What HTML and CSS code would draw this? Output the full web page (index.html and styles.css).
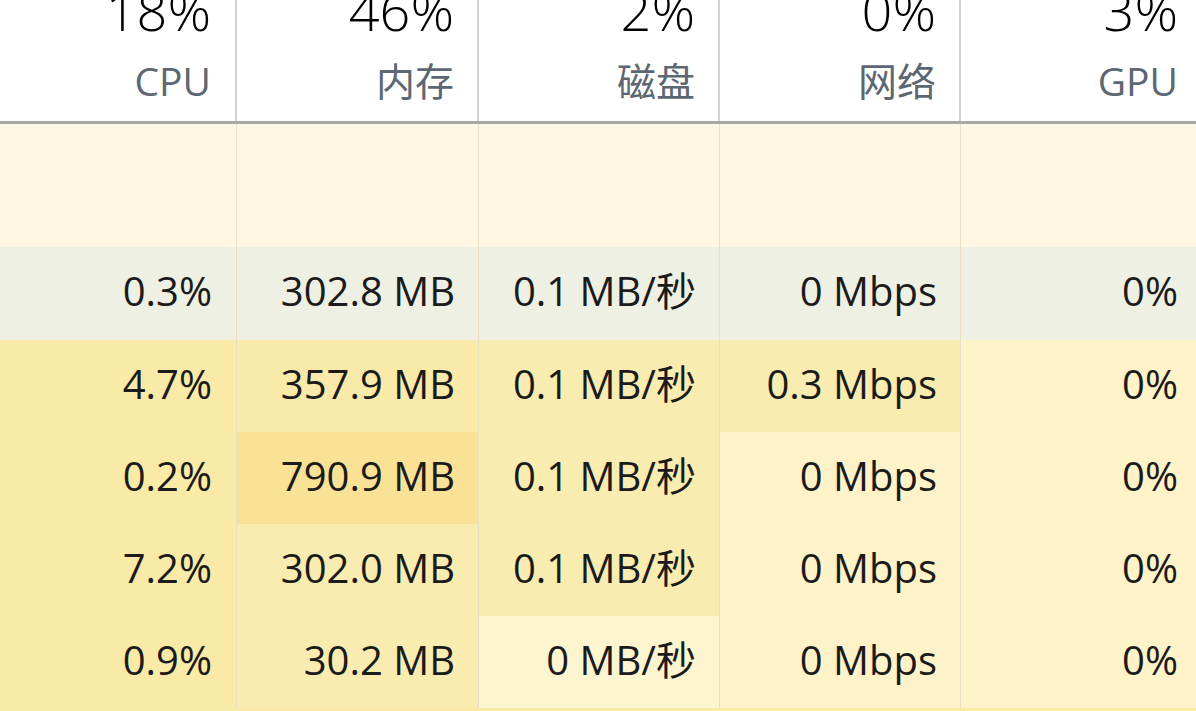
FILE: index.html
```html
<!DOCTYPE html>
<html lang="zh-CN">
<head>
<meta charset="utf-8">
<title>任务管理器</title>
<link rel="stylesheet" href="styles.css">
</head>
<body>
<div class="table">
  <div class="row head">
    <div class="cell"><span class="big">18%</span><span class="label">CPU</span></div>
    <div class="cell"><span class="big">46%</span><span class="label">内存</span></div>
    <div class="cell"><span class="big">2%</span><span class="label">磁盘</span></div>
    <div class="cell"><span class="big">0%</span><span class="label">网络</span></div>
    <div class="cell"><span class="big">3%</span><span class="label">GPU</span></div>
  </div>
  <div class="row group">
    <div class="cell"></div><div class="cell"></div><div class="cell"></div><div class="cell"></div><div class="cell"></div>
  </div>
  <div class="row data hover">
    <div class="cell">0.3%</div>
    <div class="cell">302.8 MB</div>
    <div class="cell">0.1 MB/秒</div>
    <div class="cell">0 Mbps</div>
    <div class="cell">0%</div>
  </div>
  <div class="row data">
    <div class="cell h-cpu">4.7%</div>
    <div class="cell h-2">357.9 MB</div>
    <div class="cell h-3">0.1 MB/秒</div>
    <div class="cell h-3">0.3 Mbps</div>
    <div class="cell h-0">0%</div>
  </div>
  <div class="row data">
    <div class="cell h-cpu">0.2%</div>
    <div class="cell h-1">790.9 MB</div>
    <div class="cell h-3">0.1 MB/秒</div>
    <div class="cell h-0">0 Mbps</div>
    <div class="cell h-0">0%</div>
  </div>
  <div class="row data">
    <div class="cell h-cpu">7.2%</div>
    <div class="cell h-2b">302.0 MB</div>
    <div class="cell h-3">0.1 MB/秒</div>
    <div class="cell h-0">0 Mbps</div>
    <div class="cell h-0">0%</div>
  </div>
  <div class="row data">
    <div class="cell h-cpu">0.9%</div>
    <div class="cell h-3">30.2 MB</div>
    <div class="cell h-low">0 MB/秒</div>
    <div class="cell h-0">0 Mbps</div>
    <div class="cell h-0">0%</div>
  </div>
</div>
</body>
</html>
```

FILE: styles.css
```css
html, body {
  margin: 0;
  padding: 0;
  height: 100%;
  overflow: hidden;
}

body {
  font-family: "Open Sans", "Noto Sans CJK SC", sans-serif;
  color: #1b1b1b;
  background: #f9eaa8;
}

.table {
  display: flex;
  flex-direction: column;
}

.row {
  display: grid;
  grid-template-columns: 237px 242px 241px 241px 1fr;
}

.cell {
  box-sizing: border-box;
  text-align: right;
  padding-right: 23px;
  border-right: 1px solid #e7e0c4;
}

.cell:first-child {
  padding-right: 24px;
}

.cell:last-child {
  border-right: none;
  padding-right: 18px;
}

/* header */
.head {
  background: #ffffff;
  height: 121px;
  border-bottom: 3px solid #a8a8a8;
}

.head .cell {
  display: flex;
  flex-direction: column;
  align-items: flex-end;
  border-right: 2px solid #d2d2d2;
  overflow: hidden;
}

.head .cell:last-child {
  border-right: none;
}

.big {
  font-size: 54px;
  font-weight: 300;
  line-height: 54px;
  margin-top: -17px;
  color: #000000;
}

.label {
  font-size: 39px;
  line-height: 40px;
  margin-top: 24px;
  color: #5d6773;
}

/* group row */
.group {
  height: 123px;
  background: #fff7e3;
}

/* data rows */
.data {
  height: 92px;
}

.data .cell {
  font-size: 40px;
  line-height: 88px;
  white-space: nowrap;
}

.hover {
  height: 93px;
  background: #eef0e4;
}

.h-cpu { background: #f9eaa8; }
.h-1 { background: #f9e196; }
.h-2 { background: #f9eaa9; }
.h-2b { background: #f9ecb0; }
.h-3 { background: #f9ecb1; }
.h-low { background: #fdf4d0; }
.h-0 { background: #fef3c8; }
```
